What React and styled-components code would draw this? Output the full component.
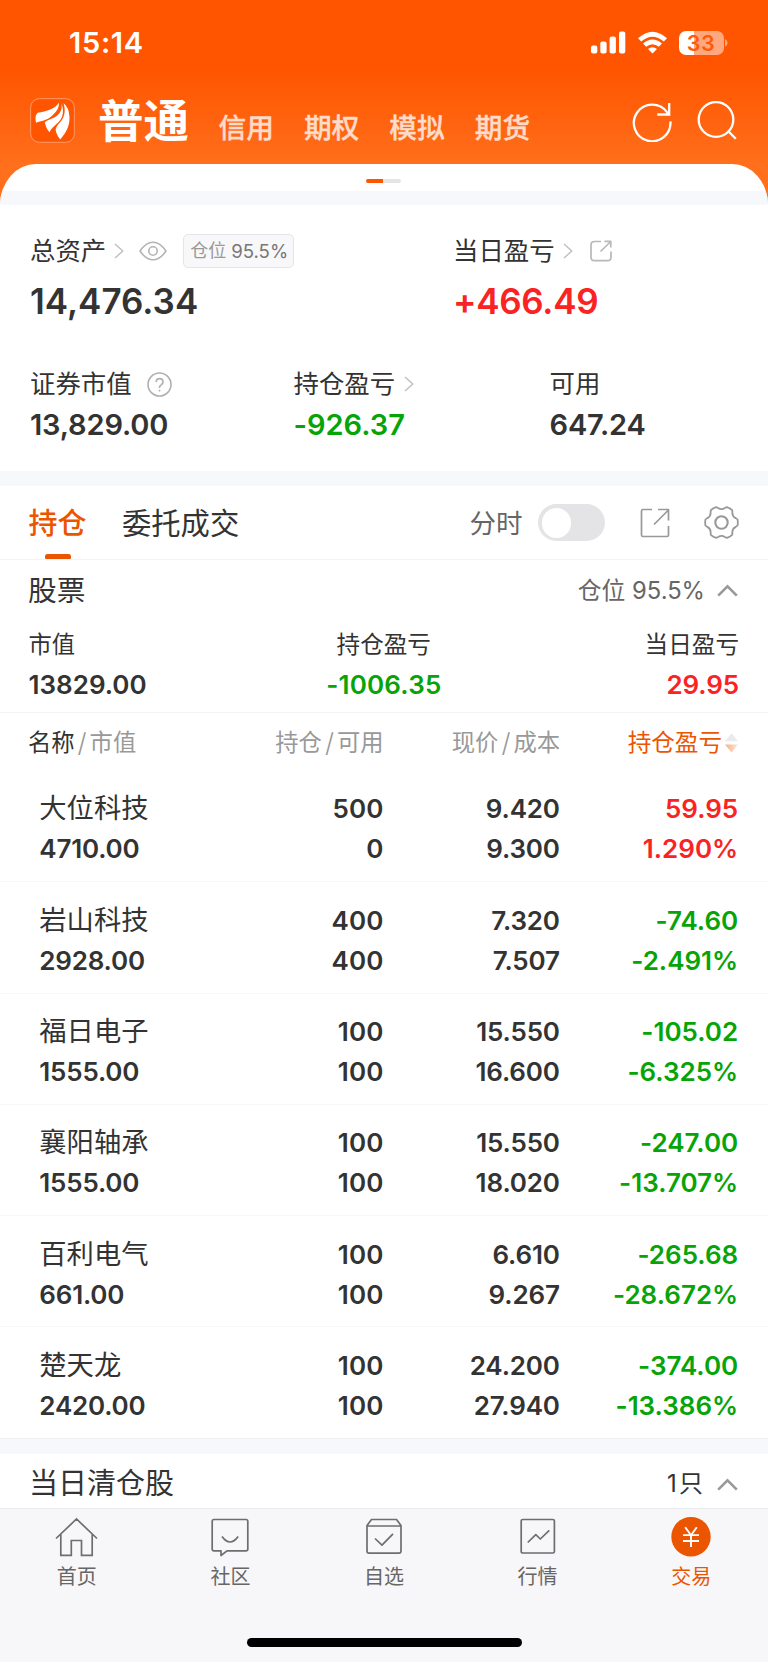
import React from "react";
import styled, { createGlobalStyle } from "styled-components";

const Global = createGlobalStyle`
  * { box-sizing: border-box; }
  body { margin: 0; background: #fff; }
`;

const C = {
  ink: "#333", sub: "#666", mute: "#999", red: "#fa2323", green: "#07a407",
  brand: "#ec5500", gap: "#f6f8fb", line: "#f2f3f5",
};

const Page = styled.div`
  width: 768px;
  height: 1663px;
  overflow: hidden;
  background: #fff;
  color: ${C.ink};
  font-family: Inter, "Noto Sans CJK SC", sans-serif;
  font-feature-settings: "calt" 0;
  display: flex;
  flex-direction: column;
`;

const Txt = styled.span`
  display: block;
  white-space: nowrap;
  font-size: ${(p) => p.$size}px;
  line-height: ${(p) => p.$lh || 40}px;
  font-weight: ${(p) => p.$w || 400};
  color: ${(p) => p.$c || C.ink};
  letter-spacing: ${(p) => p.$ls || 0}px;
  margin-right: ${(p) => -(p.$ls || 0)}px;
`;

/* header */
const Hero = styled.header`
  height: 205px;
  flex: none;
  background: linear-gradient(#ff5500 0, #ff5500 70px, #ff6f1c 164px, #ff6f1c 100%);
`;
const StatusBar = styled.div`
  height: 80px;
  padding: 5px 40px 0 69px;
  display: flex;
  align-items: center;
  justify-content: space-between;
`;
const StatusIcons = styled.div`
  display: flex;
  align-items: center;
  gap: 12px;
`;
const Battery = styled.div`
  display: flex;
  align-items: center;
  gap: 1.5px;
`;
const BatteryBody = styled.div`
  width: 45px;
  height: 24px;
  border-radius: 7px;
  text-align: center;
  font-size: 21.5px;
  line-height: 24.5px;
  font-weight: 600;
  letter-spacing: 0.6px;
  color: #ff5a08;
  background: linear-gradient(90deg, #fff 15px, #ffa880 15px);
`;
const NavBar = styled.div`
  height: 83.5px;
  padding: 0 31.5px 0 30px;
  display: flex;
  align-items: flex-start;
`;
const Logo = styled.svg`
  display: block;
  margin-top: 18px;
  margin-right: 23px;
`;
const Accounts = styled.nav`
  flex: 1;
  display: flex;
  align-items: flex-start;
`;
const Account = styled(Txt)`
  margin-right: 30px;
  margin-top: 28px;
  -webkit-text-stroke: 0.35px #ffdcc9;
`;
const MainAccount = styled(Txt)`
  margin-right: 29.5px;
  margin-top: 11.5px;
`;
const NavIcons = styled.div`
  display: flex;
  gap: 24px;
  padding-top: 19.5px;
`;
const Sheet = styled.div`
  height: 41.5px;
  background: #fff;
  border-radius: 37px 37px 0 0 / 42px 42px 0 0;
  overflow: hidden;
  display: flex;
  flex-direction: column;
  align-items: center;
`;
const Pager = styled.div`
  width: 35px;
  height: 4px;
  margin: 15.5px 1px 8px 0;
  border-radius: 2px;
  background: linear-gradient(90deg, #ff5500 17px, #e4e4e6 17px);
`;
const Gap = styled.div`
  height: ${(p) => p.$h}px;
  flex: none;
  align-self: stretch;
  background: ${C.gap};
`;

/* overview */
const Overview = styled.section`
  height: 266px;
  flex: none;
  padding: 26px 30px 0;
`;
const Cols = styled.div`
  display: grid;
  grid-template-columns: ${(p) => p.$cols};
  margin-bottom: ${(p) => p.$mb || 0}px;
`;
const LabelLine = styled.div`
  display: flex;
  align-items: center;
  height: 40px;
`;
const IconSlot = styled.div`
  display: flex;
  margin-left: ${(p) => p.$ml}px;
`;
const Badge = styled.div`
  display: flex;
  align-items: center;
  gap: 5px;
  width: 111px;
  height: 34px;
  margin-left: 16px;
  padding-left: 6.5px;
  border: 1px solid #e4e5e8;
  border-radius: 5px;
  background: #f8f8fa;
`;

/* positions */
const TabRow = styled.div`
  height: 74px;
  flex: none;
  padding: 0 29px 0 28.5px;
  display: flex;
  align-items: flex-start;
  border-bottom: 1px solid ${C.line};
`;
const Tab = styled.div`
  margin-right: 35.5px;
  padding-top: 18px;
  display: flex;
  flex-direction: column;
  align-items: center;
`;
const TabMark = styled.i`
  width: 26px;
  height: 5px;
  margin-top: 10.5px;
  border-radius: 2.5px 2.5px 1px 1px;
  background: ${C.brand};
`;
const Tools = styled.div`
  margin-left: auto;
  height: 74px;
  display: flex;
  align-items: center;
`;
const Switch = styled.div`
  width: 67px;
  height: 37px;
  margin: 0 35px 0 15px;
  padding: 4px;
  border-radius: 19px;
  background: #e4e4e6;
`;
const Knob = styled.div`
  width: 29.5px;
  height: 29.5px;
  border-radius: 50%;
  background: #fff;
`;
const GroupHead = styled.div`
  height: ${(p) => p.$h}px;
  flex: none;
  padding: ${(p) => p.$pt}px 30.5px 0 ${(p) => p.$pl || 28}px;
  display: flex;
  justify-content: space-between;
`;
const GroupInfo = styled.div`
  display: flex;
  align-items: center;
  height: 40px;
`;
const Summary = styled.div`
  height: 89px;
  flex: none;
  padding: 1px 29px 0 28.5px;
  display: grid;
  grid-template-columns: 1fr 1fr 1fr;
  border-bottom: 1px solid ${C.line};
`;
const Stack = styled.div`
  display: flex;
  flex-direction: column;
  align-items: ${(p) => p.$align || "flex-start"};
`;
const tableCols = "244.5px 111px 176.5px 1fr";
const TableHead = styled.div`
  height: 58.3px;
  flex: none;
  padding: 10px 29px 0 28px;
  display: grid;
  grid-template-columns: ${tableCols};
`;
const HeadCell = styled.div`
  display: flex;
  justify-content: ${(p) => (p.$left ? "flex-start" : "flex-end")};
  align-items: center;
  height: 40px;
`;
const Slash = styled(Txt)`
  width: 15px;
  margin: 0;
  display: flex;
  justify-content: center;
`;
const Row = styled.div`
  height: 111.3px;
  flex: none;
  padding: 18.5px 29.8px 0 28px;
  display: grid;
  grid-template-columns: ${tableCols};
  border-bottom: 1.5px solid #f7f7f8;
  &:last-child { border-bottom-color: #eeeff2; }
`;
const NameCell = styled(Stack)`
  padding-left: 11.3px;
`;

/* bottom bar */
const BottomBar = styled.nav`
  height: 154px;
  flex: none;
  background: #f7f7fa;
  border-top: 1.5px solid #e9eaee;
  display: flex;
  flex-direction: column;
  align-items: center;
`;
const BarItems = styled.div`
  width: 768px;
  height: 129px;
  display: grid;
  grid-template-columns: repeat(5, 1fr);
`;
const BarItem = styled.div`
  display: flex;
  flex-direction: column;
  align-items: center;
  padding-top: 8.5px;
`;
const HomeLine = styled.div`
  width: 275px;
  height: 9.5px;
  border-radius: 5px;
  background: #000;
`;

const Ico = ({ w, h, c = "#999", s = 1.7, children, vb }) => (
  <svg width={w} height={h} viewBox={vb || `0 0 ${w} ${h}`} fill="none" stroke={c} strokeWidth={s}
    style={{ display: "block" }} strokeLinejoin="round">
    {children}
  </svg>
);
const Right = () => <Ico w={10} h={16} c="#c0c0c0" s={1.5}><path d="M1 1l7.8 7L1 15" /></Ico>;
const Up = () => <Ico w={21} h={13} s={2.6}><path d="M1.2 11.6L10.5 2.4L19.8 11.6" strokeLinejoin="miter" /></Ico>;

const gear = (() => {
  const pts = [];
  for (let i = 0; i < 6; i++) {
    const at = (deg, r) => {
      const a = ((i * 60 + deg) * Math.PI) / 180;
      return `${(17.5 + r * Math.cos(a)).toFixed(2)} ${(17.5 + r * Math.sin(a)).toFixed(2)}`;
    };
    pts.push(`${i ? "L" : "M"}${at(-11, 16.3)} Q${at(0, 16.7)} ${at(11, 16.3)} L${at(17, 14.9)} Q${at(30, 12.2)} ${at(43, 14.9)}`);
  }
  return pts.join(" ") + "Z";
})();

const rows = [
  ["大位科技", "4710.00", "500", "0", "9.420", "9.300", "59.95", "1.290%"],
  ["岩山科技", "2928.00", "400", "400", "7.320", "7.507", "-74.60", "-2.491%"],
  ["福日电子", "1555.00", "100", "100", "15.550", "16.600", "-105.02", "-6.325%"],
  ["襄阳轴承", "1555.00", "100", "100", "15.550", "18.020", "-247.00", "-13.707%"],
  ["百利电气", "661.00", "100", "100", "6.610", "9.267", "-265.68", "-28.672%"],
  ["楚天龙", "2420.00", "100", "100", "24.200", "27.940", "-374.00", "-13.386%"],
];

const Num = (p) => <Txt $size={26} $w={600} $ls={-0.15} {...p} />;
const Pair = ({ a, b, c, ls }) => (
  <Stack $align="flex-end"><Num $c={c} $ls={ls}>{a}</Num><Num $c={c} $ls={ls}>{b}</Num></Stack>
);
const Label = (p) => <Txt $size={25.4} {...p} />;

const icons = {
  home: (
    <Ico w={43} h={40} c="#6e6e70"><path d="M1 21.5L21.5 2L42 21.5M5.8 17.5V38.3H16.3V23.5H26.5V38.3H37.2V17.5" strokeLinejoin="miter" /></Ico>
  ),
  chat: (
    <Ico w={38} h={40} c="#6e6e70"><path d="M3 2.5H35Q36.8 2.5 36.8 4.3V32Q36.8 33.8 35 33.8H16L10 38.5V33.8H3Q1.2 33.8 1.2 32V4.3Q1.2 2.5 3 2.5Z" /><path d="M11 19.5Q19 30.5 27.2 19.5" /></Ico>
  ),
  pick: (
    <Ico w={36} h={40} c="#6e6e70"><path d="M5.5 2.5H30.5L35 8.5V34Q35 36.2 33 36.2H3Q1 36.2 1 34V8.5ZM1 9H35M9 21.5L16 28.2L27 16.8" /></Ico>
  ),
  market: (
    <Ico w={36} h={40} c="#6e6e70"><rect x="1.2" y="2.5" width="33.2" height="33.5" rx="1.6" /><path d="M7.7 25.5L15.8 17.7L20.3 22L29.3 13.3" /></Ico>
  ),
  trade: (
    <Ico w={40} h={40} c="#fff" s={1.9}><circle cx="20" cy="19.7" r="19.7" fill={C.brand} stroke="none" /><path d="M14.2 10.2L20 18.2L25.8 10.2M20 18V30M12 18.1H28M12 24H28" /></Ico>
  ),
};

export default function App() {
  return (
    <Page>
      <Global />
      <Hero>
        <StatusBar>
          <Txt $size={29} $w={600} $ls={0.7} $c="#fff">15:14</Txt>
          <StatusIcons>
            <Ico w={35} h={23} c="none"><g fill="#fff"><rect y="14.5" width="6.3" height="8" rx="2" /><rect x="9.3" y="10.5" width="6.3" height="12" rx="2" /><rect x="18.6" y="5.5" width="6.3" height="17" rx="2" /><rect x="28" y="0.5" width="6.3" height="22" rx="2" /></g></Ico>
            <Ico w={29} h={23} c="none">
              <g fill="#fff">
                <path d="M14.5 22.5L10 18Q14.5 14.3 19 18Z" />
                <path d="M5 12.6Q14.5 4.4 24 12.6L20.8 15.8Q14.5 10.6 8.2 15.8Z" />
                <path d="M0 7.3Q14.5 -5.8 29 7.3L25.8 10.5Q14.5 0.8 3.2 10.5Z" />
              </g>
            </Ico>
            <Battery>
              <BatteryBody>33</BatteryBody>
              <Ico w={3} h={8} c="none"><path d="M0 0Q2.6 1.5 2.6 4T0 8Z" fill="#ffa880" /></Ico>
            </Battery>
          </StatusIcons>
        </StatusBar>
        <NavBar>
          <Logo width="45" height="45" viewBox="89.5 293.5 135 135">
            <rect x="91.5" y="295.5" width="131" height="131" rx="26" fill="#ff5500" stroke="#ff9966" strokeWidth="3" />
            <g fill="#fff">
              <path d="M176 308C165 326 140 334 112 338Q102 350 108 368C122 361 140 362 152 350C167 338 178 324 176 308Z" />
              <path d="M183 310C188 326 180 342 164 351C150 358 136 361 134 367Q138 386 148 396C156 376 185 368 188 340Q190 322 183 310Z" />
              <path d="M190 309C198 332 192 352 181 365C170 377 164 386 168 396Q172 408 180 418C197 398 209 380 208 350Q206 320 190 309Z" />
            </g>
          </Logo>
          <Accounts>
            <MainAccount $size={45.5} $w={700} $lh={60} $c="#fff">普通</MainAccount>
            {["信用", "期权", "模拟", "期货"].map((t) => (
              <Account key={t} $size={27.7} $w={500} $c="#ffdcc9">{t}</Account>
            ))}
          </Accounts>
          <NavIcons>
            <Ico w={42} h={42} c="#fff" s={2.3}><path d="M39.4 21.3A18.3 18.3 0 1 1 36 12.2L38.2 14.6M38.2 3V14.5H26.3" strokeLinejoin="miter" /></Ico>
            <Ico w={40} h={42} c="#fff" s={2.3}><circle cx="19" cy="19.5" r="17.3" /><path d="M30.8 30.8L38.8 38.8" /></Ico>
          </NavIcons>
        </NavBar>
        <Sheet>
          <Pager />
          <Gap $h={14} />
        </Sheet>
      </Hero>

      <Overview>
        <Cols $cols="423px 1fr" $mb={32}>
          <Stack>
            <LabelLine>
              <Label>总资产</Label>
              <IconSlot $ml={8}><Right /></IconSlot>
              <IconSlot $ml={14.5}>
                <Ico w={28} h={20} c="#b4b4b4" s={1.6}><path d="M1 10Q7 1.2 14 1.2T27 10Q21 18.8 14 18.8T1 10Z" /><circle cx="14" cy="10" r="4.2" /></Ico>
              </IconSlot>
              <Badge><Txt $size={18} $c="#999">仓位</Txt><Txt $size={18.6} $c="#777">95.5%</Txt></Badge>
            </LabelLine>
            <Txt $size={35} $w={600} $lh={61}>14,476.34</Txt>
          </Stack>
          <Stack>
            <LabelLine>
              <Label>当日盈亏</Label>
              <IconSlot $ml={8}><Right /></IconSlot>
              <IconSlot $ml={17}>
                <Ico w={22} h={22} c="#b8b8b8" s={1.7}><path d="M11 1.5H4.5Q1 1.5 1 5V17Q1 20.7 4.5 20.7H17.5Q21 20.7 21 17V11.5M10.5 11.5L20.8 1.5M14.5 1.3H20.8V7.5" /></Ico>
              </IconSlot>
            </LabelLine>
            <Txt $size={35} $w={600} $lh={61} $ls={-0.3} $c={C.red}>+466.49</Txt>
          </Stack>
        </Cols>
        <Cols $cols="263.5px 256px 1fr">
          <Stack>
            <LabelLine>
              <Label>证券市值</Label>
              <IconSlot $ml={15.5}>
                <Ico w={25} h={25} c="#b0b0b0" s={1.6}><circle cx="12.5" cy="12.5" r="11.5" /><path d="M9.2 10Q9.2 6.6 12.6 6.6T16 10Q16 11.6 14.2 12.8T12.5 15.2V16M12.5 17.8V19.6" /></Ico>
              </IconSlot>
            </LabelLine>
            <Txt $size={29} $w={600} $lh={42} $ls={-0.15}>13,829.00</Txt>
          </Stack>
          <Stack>
            <LabelLine>
              <Label>持仓盈亏</Label>
              <IconSlot $ml={8.5}><Right /></IconSlot>
            </LabelLine>
            <Txt $size={29} $w={600} $lh={42} $c={C.green}>-926.37</Txt>
          </Stack>
          <Stack>
            <LabelLine><Label>可用</Label></LabelLine>
            <Txt $size={29} $w={600} $lh={42} $ls={-0.15}>647.24</Txt>
          </Stack>
        </Cols>
      </Overview>
      <Gap $h={14.7} />

      <TabRow>
        <Tab>
          <Txt $size={29} $w={500} $c={C.brand}>持仓</Txt>
          <TabMark />
        </Tab>
        <Tab><Txt $size={29.3}>委托成交</Txt></Tab>
        <Tools>
          <Txt $size={26.5} $c={C.sub}>分时</Txt>
          <Switch><Knob /></Switch>
          <Ico w={30} h={30}><path d="M12 1.5H3Q1.5 1.5 1.5 3V27Q1.5 28.5 3 28.5H27Q28.5 28.5 28.5 27V18M14 16.5L28.5 2M18 1.5H28.5V12.5" /></Ico>
          <IconSlot $ml={34.5}>
            <Ico w={35} h={35} s={1.8}><path d={gear} /><circle cx="17.5" cy="17.5" r="6.2" strokeWidth="2.1" /></Ico>
          </IconSlot>
        </Tools>
      </TabRow>

      <GroupHead $h={64} $pt={11}>
        <Txt $size={28.7}>股票</Txt>
        <GroupInfo>
          <Txt $size={23.8} $c={C.sub}>仓位 95.5%</Txt>
          <IconSlot $ml={11.5}><Up /></IconSlot>
        </GroupInfo>
      </GroupHead>
      <Summary>
        <Stack><Txt $size={23.3}>市值</Txt><Num $ls={0}>13829.00</Num></Stack>
        <Stack $align="center"><Txt $size={23.6}>持仓盈亏</Txt><Num $c={C.green} $ls={0.2}>-1006.35</Num></Stack>
        <Stack $align="flex-end"><Txt $size={23.6}>当日盈亏</Txt><Num $c={C.red}>29.95</Num></Stack>
      </Summary>

      <TableHead>
        <HeadCell $left><Txt $size={23.3}>名称</Txt><Slash $size={26} $w={300} $c={C.mute}>/</Slash><Txt $size={23.3} $c={C.mute}>市值</Txt></HeadCell>
        {[["持仓", "可用"], ["现价", "成本"]].map(([a, b]) => (
          <HeadCell key={a}><Txt $size={23.3} $c={C.mute}>{a}</Txt><Slash $size={26} $w={300} $c={C.mute}>/</Slash><Txt $size={23.3} $c={C.mute}>{b}</Txt></HeadCell>
        ))}
        <HeadCell>
          <Txt $size={23.6} $c={C.brand}>持仓盈亏</Txt>
          <IconSlot $ml={2}>
            <svg width="15" height="20" viewBox="0 0 15 20">
              <defs><linearGradient id="fade" x1="0" x2="1" y1="0" y2="0"><stop stopColor="#f9ab80" /><stop offset="1" stopColor="#fde9df" /></linearGradient></defs>
              <path d="M7.5 0.5L14 8.3H1Z" fill="#e9eaec" />
              <path d="M7.5 19.5L14 11.5H1Z" fill="url(#fade)" />
            </svg>
          </IconSlot>
        </HeadCell>
      </TableHead>
      <div>
        {rows.map((r) => (
          <Row key={r[0]}>
            <NameCell><Txt $size={27.3}>{r[0]}</Txt><Num $ls={-0.2}>{r[1]}</Num></NameCell>
            <Pair a={r[2]} b={r[3]} ls={0.2} />
            <Pair a={r[4]} b={r[5]} ls={-0.15} />
            <Pair a={r[6]} b={r[7]} ls={0} c={r[6][0] === "-" ? C.green : C.red} />
          </Row>
        ))}
      </div>
      <Gap $h={15} />
      <GroupHead $h={54} $pt={10.5} $pl={29}>
        <Txt $size={29}>当日清仓股</Txt>
        <GroupInfo>
          <Txt $size={24} $ls={2.2}>1只</Txt>
          <IconSlot $ml={13.5}><Up /></IconSlot>
        </GroupInfo>
      </GroupHead>

      <BottomBar>
        <BarItems>
          {[["home", "首页"], ["chat", "社区"], ["pick", "自选"], ["market", "行情"], ["trade", "交易"]].map(([k, t]) => (
            <BarItem key={k}>{icons[k]}<Txt $size={20} $c={k === "trade" ? C.brand : C.sub}>{t}</Txt></BarItem>
          ))}
        </BarItems>
        <HomeLine />
      </BottomBar>
    </Page>
  );
}
